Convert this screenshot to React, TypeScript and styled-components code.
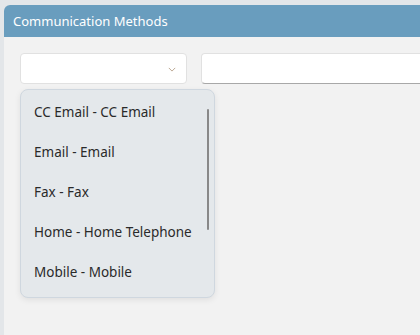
import styled, { createGlobalStyle } from 'styled-components';

const GlobalStyle = createGlobalStyle`
  html, body {
    margin: 0;
    padding: 0;
    background: #e3e6e9;
    font-family: "Noto Sans", "Open Sans", sans-serif;
    overflow: hidden;
  }
`;

const methods = [
  'CC Email - CC Email',
  'Email - Email',
  'Fax - Fax',
  'Home - Home Telephone',
  'Mobile - Mobile',
];

export default function App() {
  return (
    <>
      <GlobalStyle />
      <Page>
        <Panel>
          <Header>Communication Methods</Header>
          <Body>
            <Controls>
              <SelectBox>
                <Chevron viewBox="0 0 10 6">
                  <path d="M1 1 L5 5 L9 1" />
                </Chevron>
              </SelectBox>
              <TextInput />
            </Controls>
            <Dropdown>
              <List>
                {methods.map((m) => (
                  <Item key={m}>{m}</Item>
                ))}
              </List>
              <ScrollThumb />
            </Dropdown>
          </Body>
        </Panel>
      </Page>
    </>
  );
}

const Page = styled.div`
  width: 420px;
  height: 335px;
  padding: 5px 0 0 4px;
  box-sizing: border-box;
`;

const Panel = styled.div`
  width: 430px;
  height: 330px;
  background: #f2f2f2;
  border-top-left-radius: 6px;
  overflow: hidden;
`;

const Header = styled.div`
  height: 32px;
  box-sizing: border-box;
  padding: 1px 0 0 9px;
  background: #699dbe;
  color: #ffffff;
  font-size: 13px;
  line-height: 31px;
`;

const Body = styled.div`
  padding: 16px 0 0 16px;
`;

const Controls = styled.div`
  display: flex;
  gap: 14px;
`;

const SelectBox = styled.div`
  position: relative;
  width: 167px;
  height: 31px;
  box-sizing: border-box;
  background: #ffffff;
  border: 1px solid #e1e1e1;
  border-radius: 4px;
`;

const Chevron = styled.svg`
  position: absolute;
  right: 10px;
  top: 13px;
  width: 8px;
  height: 5px;
  fill: none;
  stroke: #b9a58f;
  stroke-width: 1.2;
`;

const TextInput = styled.div`
  flex: 1;
  height: 31px;
  box-sizing: border-box;
  background: #ffffff;
  border: 1px solid #e1e1e1;
  border-bottom-color: #a8a8a8;
  border-radius: 4px 0 0 4px;
`;

const Dropdown = styled.div`
  position: relative;
  margin-top: 5px;
  width: 195px;
  height: 209px;
  box-sizing: border-box;
  background: #e4e8eb;
  border: 1px solid #cfd7df;
  border-radius: 8px;
  box-shadow: 0 2px 6px rgba(0, 0, 0, 0.08);
  overflow: hidden;
`;

const List = styled.div`
  display: flex;
  flex-direction: column;
  padding-top: 2px;
`;

const Item = styled.div`
  height: 40px;
  line-height: 40px;
  padding-left: 13px;
  font-size: 13.5px;
  color: #2a2a2a;
`;

const ScrollThumb = styled.div`
  position: absolute;
  left: 186px;
  top: 19px;
  width: 2px;
  height: 121px;
  background: #888888;
  border-radius: 1px;
`;
